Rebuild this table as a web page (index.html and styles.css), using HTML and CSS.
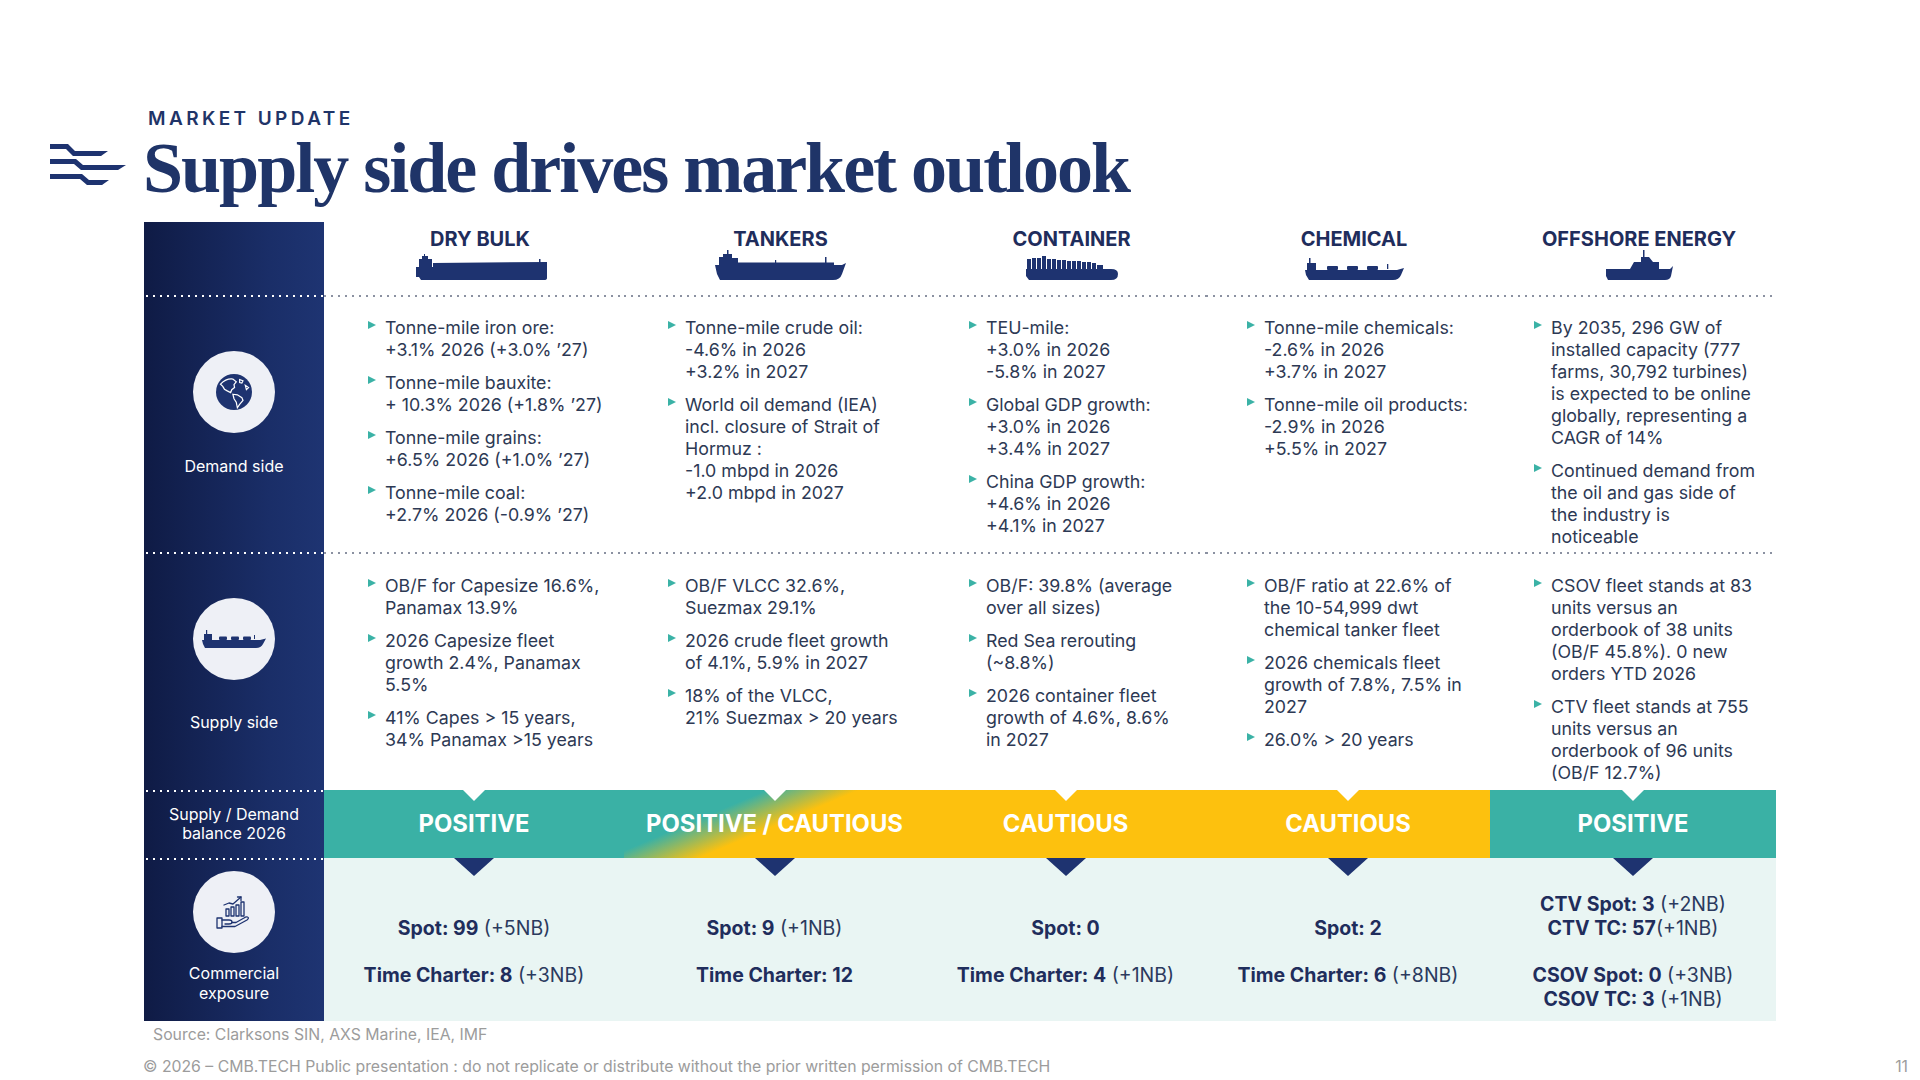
FILE: index.html
```html
<!DOCTYPE html>
<html lang="en">
<head>
<meta charset="utf-8">
<title>Supply side drives market outlook</title>
<link rel="stylesheet" href="styles.css">
</head>
<body>
<div class="page">
  <header class="header">
    <svg class="logo" viewBox="0 0 76 44" width="76" height="44">
      <path d="M0 1 H18 L25 8 H58 L51 13 H23 L16 6 H0 Z"/>
      <path d="M0 16 H26 L33 22 H76 L68 27 H31 L24 21 H0 Z"/>
      <path d="M0 31 H32 L39 37 H59 L52 42 H37 L30 36 H0 Z"/>
    </svg>
    <div class="titles">
      <div class="kicker">MARKET UPDATE</div>
      <h1 class="title">Supply side drives market outlook</h1>
    </div>
  </header>

  <div class="grid">
    <div class="side"></div>
    <div class="hdr">
      <div class="cat">DRY BULK</div>
      <div class="ship">
        <svg viewBox="0 0 135 26" width="135" height="26"><path d="M3 13 H20 V9 L134 8 V24 Q134 26 131 26 H8 L6 23 H3 Z"/><path d="M6 13 V5 H9 V2 H11 V0 H12 V2 H15 V5 H19 V13 Z"/><rect x="126" y="5" width="1.5" height="4"/></svg>
      </div>
    </div>
    <div class="hdr">
      <div class="cat">TANKERS</div>
      <div class="ship">
        <svg viewBox="0 0 131 30" width="131" height="30"><path d="M0 15 H127 L131 13 L127 24 Q125 30 118 30 H5 L2 24 Z"/><path d="M4 15 V7 H8 V4 H12 V0 H13.5 V4 H17 V8 H23 V15 Z"/><rect x="23" y="12.5" width="96" height="2.5"/><rect x="110" y="7" width="1.5" height="6"/><rect x="60" y="10" width="1.2" height="3"/></svg>
      </div>
    </div>
    <div class="hdr">
      <div class="cat">CONTAINER</div>
      <div class="ship">
        <svg viewBox="0 0 93 25" width="93" height="25"><path d="M1 14 H86 Q93 14 93 19 Q93 25 86 25 H4 L1 21 Z"/><rect x="2" y="4" width="4" height="11"/><rect x="7" y="3" width="4" height="12"/><rect x="12" y="3" width="4" height="12"/><rect x="17" y="1" width="4" height="14"/><rect x="22" y="4" width="4" height="11"/><rect x="27" y="4" width="4" height="11"/><rect x="32" y="5" width="4" height="10"/><rect x="37" y="5" width="4" height="10"/><rect x="42" y="6" width="4" height="9"/><rect x="47" y="6" width="4" height="9"/><rect x="52" y="6" width="4" height="9"/><rect x="57" y="7" width="4" height="8"/><rect x="62" y="7" width="4" height="8"/><rect x="67" y="8" width="4" height="7"/><rect x="72" y="10" width="6" height="5"/></svg>
      </div>
    </div>
    <div class="hdr">
      <div class="cat">CHEMICAL</div>
      <div class="ship">
        <svg viewBox="0 0 99 22" width="99" height="22"><path d="M0 12 H92 L99 10 L96 17 Q94 22 88 22 H4 L1 17 Z"/><path d="M2 12 V5 H4 V0 H5.5 V5 H11 V12 Z"/><rect x="22" y="8" width="11" height="4" rx="1"/><rect x="42" y="8" width="11" height="4" rx="1"/><rect x="62" y="8" width="11" height="4" rx="1"/><rect x="82" y="6" width="1.3" height="5"/></svg>
      </div>
    </div>
    <div class="hdr">
      <div class="cat">OFFSHORE ENERGY</div>
      <div class="ship">
        <svg viewBox="0 0 67 30" width="67" height="30"><path d="M0 19 H64 L67 16 L65 26 Q64 30 59 30 H2 L0 26 Z"/><path d="M24 19 L28 12 H35 V7 H37 V0 H38.5 V7 H43 L47 12 H53 V19 Z"/></svg>
      </div>
    </div>

    <div class="side demand dotw">
      <div class="circle">
        <svg class="globe" viewBox="0 0 32 32" width="36" height="36">
          <circle cx="16" cy="16" r="16" fill="#1e3370"/>
          <path d="M4 9 C7 6 11 4 15 4.5 L18 7 L16 9.5 L16.5 12 L14 14 L13 16.5 L10 15 L7.5 13.5 L6 11 Z" fill="none" stroke="#fff" stroke-width="1.1"/>
          <path d="M15 18 L19 18.5 L23 21 L24 23.5 L21 27 L19 30 L18 25 L16 22 Z" fill="none" stroke="#fff" stroke-width="1.1"/>
          <path d="M21 5 L24 6 L23 8 L21 7.5 Z M26 10 L29 12 L27 14 Z" fill="none" stroke="#fff" stroke-width="1"/>
        </svg>
      </div>
      <div class="slabel">Demand side</div>
    </div>
    <div class="data dot">
      <ul>
        <li><span>Tonne-mile iron ore:<br>+3.1% 2026 (+3.0% ’27)</span></li>
        <li><span>Tonne-mile bauxite:<br>+ 10.3% 2026 (+1.8% ’27)</span></li>
        <li><span>Tonne-mile grains:<br>+6.5% 2026 (+1.0% ’27)</span></li>
        <li><span>Tonne-mile coal:<br>+2.7% 2026 (-0.9% ’27)</span></li>
      </ul>
    </div>
    <div class="data dot">
      <ul>
        <li><span>Tonne-mile crude oil:<br>-4.6% in 2026<br>+3.2% in 2027</span></li>
        <li><span>World oil demand (IEA)<br>incl. closure of Strait of<br>Hormuz :<br>-1.0 mbpd in 2026<br>+2.0 mbpd in 2027</span></li>
      </ul>
    </div>
    <div class="data dot">
      <ul>
        <li><span>TEU-mile:<br>+3.0% in 2026<br>-5.8% in 2027</span></li>
        <li><span>Global GDP growth:<br>+3.0% in 2026<br>+3.4% in 2027</span></li>
        <li><span>China GDP growth:<br>+4.6% in 2026<br>+4.1% in 2027</span></li>
      </ul>
    </div>
    <div class="data dot narrow">
      <ul>
        <li><span>Tonne-mile chemicals:<br>-2.6% in 2026<br>+3.7% in 2027</span></li>
        <li><span>Tonne-mile oil products:<br>-2.9% in 2026<br>+5.5% in 2027</span></li>
      </ul>
    </div>
    <div class="data dot">
      <ul>
        <li><span>By 2035, 296 GW of<br>installed capacity (777<br>farms, 30,792 turbines)<br>is expected to be online<br>globally, representing a<br>CAGR of 14%</span></li>
        <li><span>Continued demand from<br>the oil and gas side of<br>the industry is<br>noticeable</span></li>
      </ul>
    </div>

    <div class="side supply dotw">
      <div class="circle">
        <svg viewBox="0 0 64 18" width="64" height="18"><path d="M0 10 H58 L64 8.5 L61 14 Q59 18 54 18 H3 L1 14 Z"/><path d="M2 10 V4 H4 V0 H5.2 V4 H10 V10 Z"/><rect x="17" y="6.5" width="8" height="3.5" rx="1"/><rect x="29" y="6.5" width="8" height="3.5" rx="1"/><rect x="41" y="6.5" width="8" height="3.5" rx="1"/><rect x="52" y="5" width="1" height="4"/></svg>
      </div>
      <div class="slabel">Supply side</div>
    </div>
    <div class="data dot sup">
      <ul>
        <li><span>OB/F for Capesize 16.6%,<br>Panamax 13.9%</span></li>
        <li><span>2026 Capesize fleet<br>growth 2.4%, Panamax<br>5.5%</span></li>
        <li><span>41% Capes &gt; 15 years,<br>34% Panamax &gt;15 years</span></li>
      </ul>
    </div>
    <div class="data dot sup">
      <ul>
        <li><span>OB/F VLCC 32.6%,<br>Suezmax 29.1%</span></li>
        <li><span>2026 crude fleet growth<br>of 4.1%, 5.9% in 2027</span></li>
        <li><span>18% of the VLCC,<br>21% Suezmax &gt; 20 years</span></li>
      </ul>
    </div>
    <div class="data dot sup">
      <ul>
        <li><span>OB/F: 39.8% (average<br>over all sizes)</span></li>
        <li><span>Red Sea rerouting<br>(~8.8%)</span></li>
        <li><span>2026 container fleet<br>growth of 4.6%, 8.6%<br>in 2027</span></li>
      </ul>
    </div>
    <div class="data dot sup narrow">
      <ul>
        <li><span>OB/F ratio at 22.6% of<br>the 10-54,999 dwt<br>chemical tanker fleet</span></li>
        <li><span>2026 chemicals fleet<br>growth of 7.8%, 7.5% in<br>2027</span></li>
        <li><span>26.0% &gt; 20 years</span></li>
      </ul>
    </div>
    <div class="data dot sup">
      <ul>
        <li><span>CSOV fleet stands at 83<br>units versus an<br>orderbook of 38 units<br>(OB/F 45.8%). 0 new<br>orders YTD 2026</span></li>
        <li><span>CTV fleet stands at 755<br>units versus an<br>orderbook of 96 units<br>(OB/F 12.7%)</span></li>
      </ul>
    </div>

    <div class="side balance dotw">
      <div class="slabel">Supply / Demand<br>balance 2026</div>
    </div>
    <div class="band pos"><span class="notch"></span><span class="blabel">POSITIVE</span></div>
    <div class="band mix"><span class="notch"></span><span class="blabel">POSITIVE / CAUTIOUS</span></div>
    <div class="band cau"><span class="notch"></span><span class="blabel">CAUTIOUS</span></div>
    <div class="band cau"><span class="notch"></span><span class="blabel">CAUTIOUS</span></div>
    <div class="band pos"><span class="notch"></span><span class="blabel">POSITIVE</span></div>

    <div class="side commercial dotw">
      <div class="circle">
        <svg class="line-icon" viewBox="0 0 40 40" width="40" height="40">
          <path d="M10 13 L15 11 L19 12 L27 5"/>
          <path d="M23.5 5 H27 V8.5"/>
          <rect x="12" y="17" width="3" height="7"/>
          <rect x="17" y="15" width="3" height="9"/>
          <rect x="22" y="13" width="3" height="11"/>
          <rect x="27" y="10" width="3" height="14"/>
          <rect x="3" y="26" width="5" height="10"/>
          <path d="M8 28 H15 Q18 28 18 30 Q18 32 15 32 H11"/>
          <path d="M8 34.5 H21 L33 28 Q35.5 26 33.5 25 Q32 24.5 30 26 L22 30.5 H18"/>
        </svg>
      </div>
      <div class="slabel">Commercial<br>exposure</div>
    </div>
    <div class="comm"><span class="tri"></span><div class="vals"><div class="v1"><b>Spot: 99</b> (+5NB)</div><div class="v2"><b>Time Charter: 8</b> (+3NB)</div></div></div>
    <div class="comm"><span class="tri"></span><div class="vals"><div class="v1"><b>Spot: 9</b> (+1NB)</div><div class="v2"><b>Time Charter: 12</b></div></div></div>
    <div class="comm"><span class="tri"></span><div class="vals"><div class="v1"><b>Spot: 0</b></div><div class="v2"><b>Time Charter: 4</b> (+1NB)</div></div></div>
    <div class="comm"><span class="tri"></span><div class="vals"><div class="v1"><b>Spot: 2</b></div><div class="v2"><b>Time Charter: 6</b> (+8NB)</div></div></div>
    <div class="comm"><span class="tri"></span><div class="vals"><div class="v1"><b>CTV Spot: 3</b> (+2NB)<br><b>CTV TC: 57</b>(+1NB)</div><div class="v2"><b>CSOV Spot: 0</b> (+3NB)<br><b>CSOV TC: 3</b> (+1NB)</div></div></div>
  </div>

  <div class="source">Source: Clarksons SIN, AXS Marine, IEA, IMF</div>
  <div class="foot"><span>© 2026 – CMB.TECH Public presentation : do not replicate or distribute without the prior written permission of CMB.TECH</span><span class="pg">11</span></div>
</div>
</body>
</html>
```

FILE: styles.css
```css
html, body {
  margin: 0;
  padding: 0;
  background: #ffffff;
  overflow: hidden;
}
body {
  font-family: Inter, "Noto Sans", "Liberation Sans", sans-serif;
  color: #2d3954;
}
.page {
  width: 1920px;
  height: 1080px;
  box-sizing: border-box;
  padding: 110px 0 0 50px;
}
.header {
  display: flex;
  align-items: flex-end;
  gap: 17px;
}
.logo {
  fill: #1e3370;
  margin-bottom: 21px;
  flex: none;
}
.kicker {
  font-size: 19px;
  line-height: 18px;
  font-weight: 600;
  letter-spacing: 3.4px;
  color: #1f3468;
  margin-left: 5px;
}
.title {
  margin: 0;
  font-family: "Liberation Serif", "Times New Roman", serif;
  font-weight: 700;
  font-size: 72px;
  line-height: 80px;
  letter-spacing: -2px;
  color: #1f3468;
}
.grid {
  display: grid;
  grid-template-columns: 180px 300px 301px 281px 284px 286px;
  grid-template-rows: 73px 257px 238px 68px 163px;
  margin: 14px 0 0 94px;
  width: 1632px;
}
.side {
  background: linear-gradient(90deg, #0f1b45 0%, #1a2e68 70%, #1e3472 100%);
  color: #ffffff;
  display: flex;
  flex-direction: column;
  align-items: center;
  font-size: 16px;
  line-height: 20px;
  text-align: center;
}
.side.dotw {
  background:
    linear-gradient(90deg, #ffffff 0 2px, transparent 2px) 2px 0 / 7px 2px repeat-x,
    linear-gradient(90deg, #0f1b45 0%, #1a2e68 70%, #1e3472 100%);
}
.circle {
  width: 82px;
  height: 82px;
  border-radius: 50%;
  background: #eef0f6;
  display: flex;
  align-items: center;
  justify-content: center;
  flex: none;
}
.circle svg { fill: #1e3370; }
.circle svg.line-icon {
  fill: none;
  stroke: #1e3370;
  stroke-width: 1.3;
  stroke-linejoin: round;
  stroke-linecap: round;
}
.demand { padding-top: 56px; gap: 23px; }
.supply { padding-top: 46px; gap: 32px; }
.balance { justify-content: center; line-height: 19px; }
.commercial { padding-top: 13px; gap: 10px; }
.hdr {
  display: flex;
  flex-direction: column;
  align-items: center;
  padding: 5px 0 0 12px;
}
.cat {
  font-size: 20px;
  line-height: 24px;
  font-weight: 700;
  color: #1f2d5c;
}
.ship {
  height: 30px;
  margin-top: -1px;
  display: flex;
  align-items: flex-end;
}
.ship svg { fill: #1e3370; display: block; }
.dot {
  background: linear-gradient(90deg, #8b91a1 0 2px, transparent 2px) 0 0 / 7px 2px repeat-x;
}
.data {
  padding: 22px 6px 0 44px;
  font-size: 17.8px;
  line-height: 22px;
  color: #2d3954;
}
.data.narrow { padding-left: 41px; }
.data.sup { padding-top: 23px; }
.data ul {
  list-style: none;
  margin: 0;
  padding: 0;
}
.data li {
  display: flex;
  gap: 9px;
  margin-bottom: 11px;
  white-space: nowrap;
}
.data li::before {
  content: "";
  flex: none;
  width: 0;
  height: 0;
  border-left: 8px solid #3bb2a6;
  border-top: 4.5px solid transparent;
  border-bottom: 4.5px solid transparent;
  margin-top: 4px;
}
.band {
  display: grid;
  color: #ffffff;
}
.band > * { grid-area: 1 / 1; }
.pos { background: #3ab1a5; }
.cau { background: #fdc10e; }
.mix { background: linear-gradient(157deg, #3ab1a5 31%, #fdc10e 51%); }
.notch {
  justify-self: center;
  align-self: start;
  width: 0;
  height: 0;
  border-left: 11px solid transparent;
  border-right: 11px solid transparent;
  border-top: 11px solid #ffffff;
}
.blabel {
  place-self: center;
  font-size: 23.8px;
  font-weight: 700;
  line-height: 28px;
}
.comm {
  background: #e9f5f3;
  display: flex;
  flex-direction: column;
  align-items: center;
}
.tri {
  flex: none;
  width: 0;
  height: 0;
  border-left: 20px solid transparent;
  border-right: 20px solid transparent;
  border-top: 18px solid #1e3370;
}
.vals {
  flex: 1;
  width: 100%;
  box-sizing: border-box;
  padding: 7px 0 0;
  display: grid;
  grid-template-rows: 1fr 1fr;
  row-gap: 24px;
  text-align: center;
  font-size: 19.5px;
  line-height: 23.5px;
  color: #2b3a5e;
}
.vals b { font-weight: 700; color: #1f2d5c; }
.v1 { align-self: end; }
.v2 { align-self: start; }
.source {
  margin: 5px 0 0 103px;
  font-size: 15.8px;
  line-height: 18px;
  color: #9c9c9c;
}
.foot {
  display: flex;
  justify-content: space-between;
  margin: 14px 0 0 93px;
  padding-right: 12px;
  font-size: 15.8px;
  line-height: 18px;
  color: #9c9c9c;
}
```
